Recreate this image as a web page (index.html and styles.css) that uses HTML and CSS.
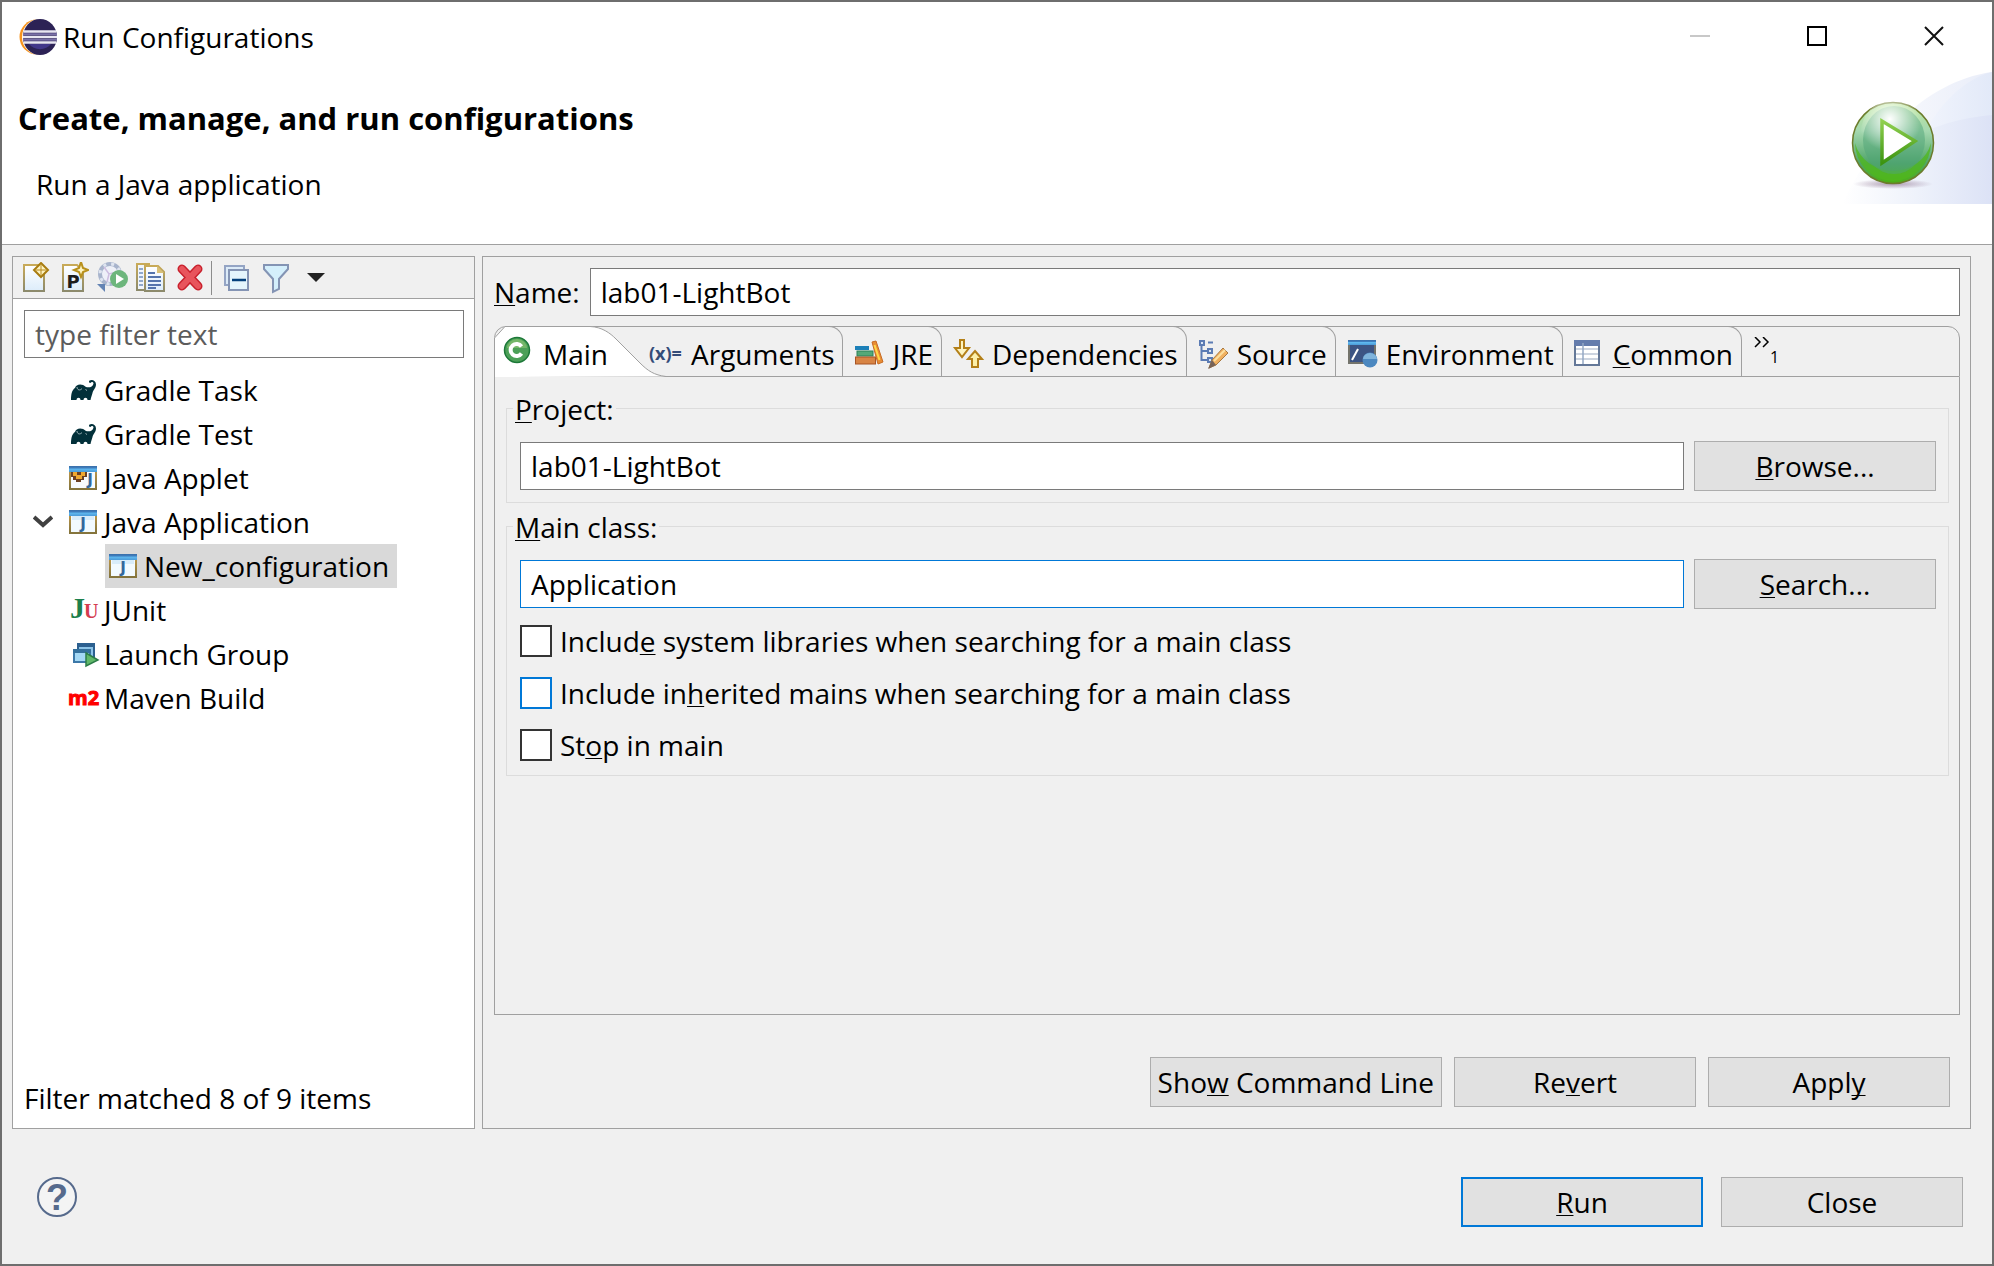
FILE: index.html
```
<!DOCTYPE html>
<html lang="en">

<head>
  <meta charset="UTF-8">
  <meta name="viewport" content="width=device-width, initial-scale=1.0">
  <title>Run Configurations</title>
  <link rel="stylesheet" href="styles.css">
</head>

<body>
  <!-- shared gradients and the gradle icon -->
  <svg class="defs" width="0" height="0" aria-hidden="true">
    <defs>
      <linearGradient id="g-bar" x1="0" y1="0" x2="0" y2="1">
        <stop offset="0" stop-color="#3a6ea8"/>
        <stop offset=".35" stop-color="#3f7fc0"/>
        <stop offset=".5" stop-color="#5fb8ee"/>
        <stop offset="1" stop-color="#4a9ad8"/>
      </linearGradient>
      <linearGradient id="g-frame" x1="0" y1="0" x2="0" y2="1">
        <stop offset="0" stop-color="#c09a4c"/>
        <stop offset="1" stop-color="#84743c"/>
      </linearGradient>
      <linearGradient id="g-page" x1="0" y1="0" x2="0" y2="1">
        <stop offset="0" stop-color="#ffffff"/>
        <stop offset="1" stop-color="#dcecfa"/>
      </linearGradient>
      <linearGradient id="g-edge" x1="0" y1="0" x2="0" y2="1">
        <stop offset="0" stop-color="#c8aa58"/>
        <stop offset="1" stop-color="#8c8a6c"/>
      </linearGradient>
    </defs>
    <symbol id="gradle" viewBox="0 0 28 28">
      <path d="M2 24C2 18 3 14 6 12C7 8 13 7 17 11C20 12 24 11 24.500 7.500C24.500 5.500 22 5.500 21.500 7C20 7 19.500 5.500 20.500 4.500C23 3 27 4.500 27 8.500C27 12 24 14 23.500 17C23 19 22 21 21.500 24H18.500C18.500 21 14.500 21 14.500 24H11.500C11.500 21 7.500 21 7.500 24Z" fill="#02303a"/>
      <path d="M8 11C8 14 11 15 13 12.500M16.500 13.500L18 14.500" fill="none" stroke="#9fb3b8" stroke-width="1"/>
    </symbol>
  </svg>

  <div class="titlebar">
    <svg width="40" height="38" viewBox="0 0 40 38" aria-hidden="true">
      <circle cx="18" cy="19" r="17.500" fill="#f7941e"/>
      <circle cx="21" cy="19" r="18" fill="#fff"/>
      <ellipse cx="21" cy="19" rx="17" ry="18" fill="#2c2255"/>
      <path d="M10 26H32A13 11 0 0 1 10 26Z" fill="#42378a"/>
      <path d="M5 13.500H37M4 19H38M5 24.500H37" stroke="#e8e6f2" stroke-width="2.500"/>
      <path d="M4 16.200H38M4 21.800H38" stroke="#7a70a8" stroke-width="2"/>
    </svg>
    <span class="title">Run Configurations</span>
    <div class="win-controls">
      <button class="minimize" aria-label="Minimize" disabled><svg width="20" height="20"><path d="M0 10H20" stroke="#c8c8c8" stroke-width="2"/></svg></button>
      <button aria-label="Maximize"><svg width="20" height="20"><rect x="1" y="1" width="18" height="18" fill="none" stroke="#000" stroke-width="2"/></svg></button>
      <button aria-label="Close window"><svg width="20" height="20"><path d="M1 1L19 19M19 1L1 19" stroke="#111" stroke-width="2"/></svg></button>
    </div>
  </div>

  <header>
    <div class="headline">
      <h1>Create, manage, and run configurations</h1>
      <p>Run a Java application</p>
    </div>
    <svg width="150" height="132" viewBox="0 0 150 132" aria-hidden="true">
      <defs>
        <linearGradient id="b1" x1="0" x2="1"><stop offset="0" stop-color="#fff"/><stop offset="1" stop-color="#e9edf9"/></linearGradient>
        <linearGradient id="b2" x1="0" x2="1"><stop offset="0" stop-color="#f6f8fe"/><stop offset="1" stop-color="#e2e9f8"/></linearGradient>
        <linearGradient id="b3" x1="0" x2="1"><stop offset="0" stop-color="#fff"/><stop offset=".5" stop-color="#eef2fb"/><stop offset="1" stop-color="#dce2f6"/></linearGradient>
        <linearGradient id="ball" x1="0" y1="0" x2="0" y2="1"><stop offset="0" stop-color="#bfe8a0"/><stop offset=".35" stop-color="#a5d8b0"/><stop offset=".75" stop-color="#4ea468"/><stop offset="1" stop-color="#4cb010"/></linearGradient>
        <radialGradient id="shine" cx=".45" cy=".3" r=".5"><stop offset="0" stop-color="#fff"/><stop offset="1" stop-color="#fff" stop-opacity="0"/></radialGradient>
        <linearGradient id="tri" x1="0" y1="0" x2="0" y2="1"><stop offset="0" stop-color="#90d050"/><stop offset="1" stop-color="#3c9410"/></linearGradient>
        <radialGradient id="shade"><stop offset="0" stop-color="#806080" stop-opacity=".6"/><stop offset="1" stop-color="#806080" stop-opacity="0"/></radialGradient>
      </defs>
      <path d="M0 132C30 70 80 10 150 0V132Z" fill="url(#b1)"/>
      <path d="M60 132C70 60 110 10 150 0V132Z" fill="url(#b2)"/>
      <path d="M0 132C35 75 90 48 150 43V132Z" fill="url(#b3)"/>
      <ellipse cx="51" cy="112" rx="40" ry="5" fill="url(#shade)"/>
      <circle cx="51" cy="71" r="40.500" fill="url(#ball)" stroke="#6c7c2c" stroke-width="1.500"/>
      <path d="M13 71A38 38 0 0 0 89 71A39 36 0 0 1 13 71Z" fill="#50b81c" opacity=".75"/>
      <ellipse cx="52" cy="68" rx="31" ry="34" fill="#50a478" opacity=".5"/>
      <circle cx="51" cy="60" r="32" fill="url(#shine)"/>
      <path d="M40 49V91L73 69Z" fill="#fff" stroke="url(#tri)" stroke-width="3.500"/>
    </svg>
  </header>

  <main>
    <section class="configs">
      <div class="toolbar" role="toolbar" aria-label="Configuration actions">
        <button aria-label="New launch configuration">
          <svg width="28" height="32" viewBox="0 0 28 32">
            <path d="M2 3H16L22 9V29H2Z" fill="url(#g-page)" stroke="url(#g-edge)" stroke-width="2"/>
            <path d="M19 1L26 8L19 15L12 8Z" fill="#fdf3c0" stroke="#a87c10" stroke-width="2"/><path d="M19 3V13M14 8H24" stroke="#b88a20" stroke-width="1"/>
          </svg>
        </button>
        <button aria-label="New launch configuration prototype">
          <svg width="28" height="32" viewBox="0 0 28 32">
            <path d="M2 3H16L22 9V29H2Z" fill="url(#g-page)" stroke="url(#g-edge)" stroke-width="2"/>
            <text x="12" y="26" class="glyph-p">P</text>
            <path d="M20 0L22 6L27 8L22 10L20 15L18 10L13 8L18 6Z" fill="#fdf3c0" stroke="#b8901c" stroke-width="2"/>
          </svg>
        </button>
        <button class="wide" aria-label="Export launch configuration">
          <svg width="32" height="32" viewBox="0 0 32 32">
            <circle cx="13" cy="12" r="10" fill="#eef0f8" stroke="#a8b4cc" stroke-width="4"/>
            <circle cx="13" cy="12" r="10" fill="none" stroke="#dfe5f0" stroke-width="3" stroke-dasharray="3 5"/>
            <path d="M7 5L12 12L20 10M12 12L10 20" fill="none" stroke="#cdbde0" stroke-width="1.500"/>
            <path d="M0 22H8V30Z" fill="#6484b4"/>
            <circle cx="22" cy="17" r="9" fill="#6db67c"/><path d="M19 12L27 17L19 22Z" fill="#fff"/>
          </svg>
        </button>
        <button class="wide" aria-label="Duplicate">
          <svg width="32" height="32" viewBox="0 0 32 32">
            <path d="M2 2H14V28H2Z" fill="#f0f5fc" stroke="url(#g-edge)" stroke-width="2"/>
            <path d="M4 7H8M4 11H8M4 15H8M4 19H8M4 23H8" stroke="#7090bc" stroke-width="1.500"/>
            <path d="M10 4H23L29 10V29H10Z" fill="url(#g-page)" stroke="url(#g-edge)" stroke-width="2"/><path d="M22 4V11H29Z" fill="#d8c078"/>
            <path d="M13 11H20M13 15H26M13 19H26M13 23H26M13 26H21" stroke="#5474ac" stroke-width="1.800"/>
          </svg>
        </button>
        <button aria-label="Delete">
          <svg width="28" height="32" viewBox="0 0 28 32">
            <path d="M6 7L22 24M22 7L6 24" stroke="#c8202c" stroke-width="9" stroke-linecap="round"/>
            <path d="M6 7L22 24M22 7L6 24" stroke="#e8545c" stroke-width="6" stroke-linecap="round"/>
          </svg>
        </button>
        <span class="separator"></span>
        <button aria-label="Collapse all">
          <svg width="28" height="32" viewBox="0 0 28 32">
            <path d="M2 4H21V23H2Z" fill="#dcebf8" stroke="#94a4c4" stroke-width="2"/>
            <path d="M6 8H25V28H6Z" fill="#e4f5fd" stroke="#8494b4" stroke-width="2"/><path d="M9 18H23" stroke="#04407c" stroke-width="2.500"/>
          </svg>
        </button>
        <button aria-label="Filter">
          <svg width="28" height="32" viewBox="0 0 28 32">
            <path d="M2 3H26V7L17 17V27L11 30V17L2 7Z" fill="#d4effc" stroke="#8494b4" stroke-width="2"/>
          </svg>
        </button>
        <button class="drop" aria-label="View menu">
          <svg width="18" height="10"><path d="M0 0H18L9 9Z" fill="#222"/></svg>
        </button>
      </div>
      <input class="filter" type="text" placeholder="type filter text" aria-label="Filter">
      <ul class="tree" role="tree">
        <li role="treeitem"><svg class="icon"><use href="#gradle"/></svg>Gradle Task</li>
        <li role="treeitem"><svg class="icon"><use href="#gradle"/></svg>Gradle Test</li>
        <li role="treeitem">
          <svg class="icon" viewBox="0 0 28 28">
            <rect x="1" y="5" width="26" height="20" fill="#f8fbff" stroke="url(#g-frame)" stroke-width="2"/>
            <path d="M2 8H18V13H15V16H12V18H7V16H4V13H2Z" fill="#6c4024"/><path d="M4 8H16V12H13V15H7V12H4Z" fill="#f0a830"/><path d="M8 8H12V11H8Z" fill="#6c4024"/>
            <rect x="0" y="2" width="28" height="6" fill="url(#g-bar)"/>
            <text x="21" y="21" class="glyph-j">J</text>
          </svg>Java Applet
        </li>
        <li role="treeitem" aria-expanded="true">
          <button class="twisty" aria-label="Collapse Java Application"><svg width="20" height="14"><path d="M1 2L10 10L19 2" fill="none" stroke="#404040" stroke-width="4"/></svg></button>
          <svg class="icon" viewBox="0 0 28 28">
            <rect x="1" y="5" width="26" height="20" fill="#f2faff" stroke="url(#g-frame)" stroke-width="2"/><rect x="3" y="8" width="22" height="4" fill="#d8ecfa"/>
            <rect x="0" y="2" width="28" height="6" fill="url(#g-bar)"/>
            <text x="14" y="21" class="glyph-j">J</text>
          </svg>Java Application
        </li>
        <li class="child" role="treeitem" aria-selected="true">
          <span class="selected"><svg class="icon" viewBox="0 0 28 28">
            <rect x="1" y="5" width="26" height="20" fill="#f2faff" stroke="url(#g-frame)" stroke-width="2"/><rect x="3" y="8" width="22" height="4" fill="#d8ecfa"/>
            <rect x="0" y="2" width="28" height="6" fill="url(#g-bar)"/>
            <text x="14" y="21" class="glyph-j">J</text>
          </svg>New_configuration</span>
        </li>
        <li role="treeitem"><svg class="icon" viewBox="0 0 28 28"><text x="1" y="22" class="glyph-ju">J</text><text x="15" y="22" class="glyph-ju small">U</text></svg>JUnit</li>
        <li role="treeitem">
          <svg class="icon" viewBox="0 0 28 28">
            <rect x="9" y="4" width="16" height="13" fill="#8cc4e8" stroke="#2c6090" stroke-width="2"/><rect x="8" y="3" width="18" height="4" fill="#2c6090"/>
            <rect x="5" y="10" width="16" height="12" fill="#a4d8f4" stroke="#3c78a8" stroke-width="2"/><rect x="4" y="9" width="18" height="4" fill="#34709c"/>
            <path d="M17 13L29 20L17 26Z" fill="#60b868" stroke="#2c7c48" stroke-width="1.500"/>
          </svg>Launch Group
        </li>
        <li role="treeitem"><svg class="icon" viewBox="0 0 28 28"><text x="-1" y="21" class="glyph-m2">m2</text></svg>Maven Build</li>
      </ul>
      <p class="status">Filter matched 8 of 9 items</p>
    </section>

    <section class="editor">
      <div class="name-row">
        <label for="name"><u>N</u>ame:</label>
        <input id="name" type="text" value="lab01-LightBot">
      </div>

      <div class="folder">
        <div class="tabs" role="tablist">
          <button class="tab active" role="tab" aria-selected="true">
            <svg class="tab-shape" width="172" height="51" viewBox="0 0 172 51" aria-hidden="true">
              <path d="M0 51V12L11 0.500H96C108 1 116 7 122 13L146 37C154 45 160 49 172 50.500Z" fill="#fff"/>
              <path d="M0.500 51V12L11 0.500H96C108 1 116 7 122 13L146 37C154 45 160 49 172 50.500" fill="none" stroke="#a0a0a0"/>
            </svg>
            <svg class="icon raised" viewBox="0 0 28 28"><circle cx="14" cy="14" r="12.500" fill="#4ca058" stroke="#1c7838" stroke-width="1.500"/><path d="M4 12A10 9 0 0 1 24 12Z" fill="#88c070" opacity=".7"/><path d="M18.500 10.500A6 6 0 1 0 18.500 17.500" fill="none" stroke="#fff" stroke-width="4"/></svg>
            <span>Main</span>
          </button>
          <button class="tab args" role="tab"><svg class="icon long" viewBox="0 0 32 28"><text x="-1" y="20" class="glyph-x">(x)=</text></svg><span>Arguments</span></button>
          <button class="tab" role="tab">
            <svg class="icon" viewBox="0 0 28 28">
              <rect x="0" y="6" width="14" height="4" fill="#1c80b8"/><rect x="2" y="11" width="16" height="5" fill="#54a878" stroke="#2c8058"/><rect x="0.500" y="17" width="20" height="7" fill="#d88444" stroke="#a85424"/>
              <path d="M17 2L21 1L28 22L23 24Z" fill="#e88c34" stroke="#c86c24"/><path d="M19.500 5L24.500 20" stroke="#ffd848" stroke-width="2"/>
            </svg><span>JRE</span>
          </button>
          <button class="tab" role="tab">
            <svg class="icon" viewBox="0 0 28 28">
              <path d="M6 0H10V8H15L8 17L1 8H6Z" fill="#fdf4c0" stroke="#b48018" stroke-width="2"/>
              <path d="M21 11L28 19H24V27H18V19H14Z" fill="#fdf0a8" stroke="#b48018" stroke-width="2"/>
            </svg><span>Dependencies</span>
          </button>
          <button class="tab" role="tab">
            <svg class="icon" viewBox="0 0 28 28">
              <path d="M2.500 4V20H9M2.500 11H9M9 2.500H14" fill="none" stroke="#5c7cb4" stroke-width="2"/>
              <path d="M1 1H5V5H1ZM9 9H13V13H9ZM9 18H13V22H9Z" fill="#dce6f4" stroke="#5c7cb4" stroke-width="2"/>
              <path d="M24 8L29 13L17 25L10 28L13 20Z" fill="#f0b060" stroke="#a87840"/><path d="M15 21L26 10" stroke="#fce0a0" stroke-width="2"/><path d="M13 20L17 25L9 29Z" fill="#786458"/>
            </svg><span>Source</span>
          </button>
          <button class="tab" role="tab">
            <svg class="icon" viewBox="0 0 28 28">
              <rect x="1" y="3" width="26" height="20" fill="#3c5484" stroke="#74746c" stroke-width="2"/><rect x="0" y="0" width="28" height="5" fill="url(#g-bar)"/>
              <path d="M4 20L10 9" stroke="#fff" stroke-width="2"/><circle cx="22" cy="20" r="7.500" fill="#4c88c0"/><path d="M15 19A7 6 0 0 1 29 19Z" fill="#80b4dc"/>
            </svg><span>Environment</span>
          </button>
          <button class="tab" role="tab">
            <svg class="icon" viewBox="0 0 28 28">
              <rect x="0" y="1" width="24" height="24" fill="#fff" stroke="#647898" stroke-width="2"/><rect x="-1" y="0" width="26" height="6" fill="#647cac"/>
              <path d="M1 9H23M1 14H23M1 19H23" stroke="#ccd4e0" stroke-width="2"/><path d="M8 3V24" stroke="#94a8c4" stroke-width="1.500"/>
            </svg><span><u>C</u>ommon</span>
          </button>
          <button class="more" aria-label="Show 1 more tab">
            <svg width="16" height="11"><path d="M1 0L6 5L1 10M9 0L14 5L9 10" fill="none" stroke="#000" stroke-width="1.500"/></svg><small>1</small>
          </button>
        </div>

        <div class="page" role="tabpanel">
          <fieldset>
            <legend><u>P</u>roject:</legend>
            <div class="pick">
              <input type="text" value="lab01-LightBot" aria-label="Project">
              <button class="btn"><span><u>B</u>rowse...</span></button>
            </div>
          </fieldset>
          <fieldset>
            <legend><u>M</u>ain class:</legend>
            <div class="pick">
              <input class="focused" type="text" value="Application" aria-label="Main class">
              <button class="btn"><span><u>S</u>earch...</span></button>
            </div>
            <div class="checks">
              <label><input type="checkbox"><span>Includ<u>e</u> system libraries when searching for a main class</span></label>
              <label><input class="hot" type="checkbox"><span>Include in<u>h</u>erited mains when searching for a main class</span></label>
              <label><input type="checkbox"><span>St<u>o</u>p in main</span></label>
            </div>
          </fieldset>
        </div>
      </div>

      <div class="actions">
        <button class="btn"><span>Sho<u>w</u> Command Line</span></button>
        <button class="btn"><span>Re<u>v</u>ert</span></button>
        <button class="btn"><span>Appl<u>y</u></span></button>
      </div>
    </section>
  </main>

  <footer>
    <button class="help" aria-label="Help">
      <svg width="40" height="40" viewBox="0 0 40 40"><circle cx="20" cy="20" r="19" fill="#f4f4f4" stroke="#566a8c" stroke-width="2"/><text x="20" y="33" class="glyph-q">?</text></svg>
    </button>
    <div class="dialog-buttons">
      <button class="btn default"><span><u>R</u>un</span></button>
      <button class="btn">Close</button>
    </div>
  </footer>
</body>

</html>
```
FILE: styles.css
```
*,
*::before,
*::after {
  box-sizing: border-box;
}
body {
  display: flex;
  flex-direction: column;
  min-height: 100vh;
  margin: 0;
  border: 2px solid #6e6e6e;
  background: #f0f0f0;
  color: #000;
  font-family: "Open Sans", "Noto Sans", sans-serif;
  font-size: 28px;
  line-height: 38px;
}
button,
input {
  font: inherit;
  color: inherit;
}
button {
  padding: 0;
  border: 0;
  background: none;
}
svg {
  display: block;
  flex: none;
}
u {
  text-decoration-thickness: 1px;
  text-underline-offset: 2px;
  text-decoration-skip-ink: none;
}
.defs {
  position: absolute;
}
.icon {
  width: 28px;
  height: 28px;
  overflow: visible;
}
.icon.long {
  width: 32px;
}

/* text inside icons */
.glyph-j {
  fill: #34689c;
  font: bold 15px "DejaVu Sans", sans-serif;
  text-anchor: middle;
}
.glyph-p {
  fill: #1c1c1c;
  font: bold 18px "DejaVu Sans", sans-serif;
  text-anchor: middle;
}
.glyph-ju {
  fill: #1c804c;
  font: bold 30px "Liberation Serif", serif;
}
.glyph-ju.small {
  fill: #d43c50;
  font-size: 20px;
}
.glyph-m2 {
  fill: #f00;
  stroke: #f00;
  font: bold 20px "Open Sans", sans-serif;
}
.glyph-x {
  fill: #344c78;
  font: bold 18px "Open Sans", sans-serif;
}
.glyph-q {
  fill: #566a8c;
  font: bold 36px "Liberation Sans", sans-serif;
  text-anchor: middle;
}

/* title bar */
.titlebar {
  display: flex;
  align-items: center;
  height: 70px;
  padding-left: 17px;
  background: #fff;
}
.title {
  padding-left: 4px;
}
.win-controls {
  display: flex;
  align-self: flex-start;
  margin-left: auto;
}
.win-controls button {
  display: flex;
  align-items: center;
  justify-content: center;
  width: 117px;
  height: 68px;
}

header {
  display: flex;
  justify-content: space-between;
  height: 173px;
  border-bottom: 1px solid #a0a0a0;
  background: #fff;
}
h1 {
  margin: 25px 0 24px 16px;
  font-size: 31px;
  line-height: 42px;
}
header p {
  margin: 0 0 0 34px;
  line-height: 42px;
}

main {
  display: flex;
  flex: 1;
  gap: 7px;
  padding: 11px 21px 0 10px;
}

/* left side */
.configs {
  display: flex;
  flex: none;
  flex-direction: column;
  width: 463px;
  border: 1px solid #a0a0a0;
  background: #fff;
}
.toolbar {
  display: flex;
  align-items: center;
  gap: 11px;
  height: 42px;
  padding-left: 9px;
  border-bottom: 1px solid #a0a0a0;
  background: #f0f0f0;
}
.toolbar .wide {
  margin: 0 -2px 0 -3px;
}
.separator {
  width: 1px;
  height: 34px;
  margin-left: -4px;
  background: #8c8c8c;
}
.drop {
  margin-left: 6px;
}
input[type="text"] {
  height: 48px;
  min-width: 0;
  padding: 0 10px;
  border: 1px solid #7a7a7a;
  border-radius: 0;
  outline: 0;
  background: #fff;
}
input[type="text"].filter {
  margin: 11px 10px 10px 11px;
}
.filter::placeholder {
  color: #5c5c5c;
  opacity: 1;
}
.tree {
  margin: 0;
  padding: 0;
  list-style: none;
}
.tree li {
  display: flex;
  align-items: center;
  gap: 7px;
  height: 44px;
  padding-left: 56px;
}
.twisty {
  width: 20px;
  margin: 0 9px 0 -36px;
}
.tree .child {
  padding-left: 92px;
}
.selected {
  display: flex;
  align-items: center;
  gap: 7px;
  height: 44px;
  padding: 0 8px 0 4px;
  background: #d9d9d9;
}
.status {
  margin: auto 11px 11px;
}

/* right side */
.editor {
  display: flex;
  flex: 1;
  flex-direction: column;
  min-width: 0;
  padding: 11px 10px 21px 11px;
  border: 1px solid #a0a0a0;
}
.name-row {
  display: flex;
  align-items: center;
  gap: 10px;
}
.name-row input {
  flex: 1;
}
.folder {
  display: flex;
  flex: 1;
  flex-direction: column;
  margin-top: 10px;
}
.tabs {
  display: flex;
  height: 51px;
  border: 1px solid #a0a0a0;
  border-radius: 12px 12px 0 0;
}
.tab {
  display: flex;
  align-items: center;
  gap: 10px;
  height: 50px;
  margin-top: -1px;
  padding: 4px 8px 0 12px;
  border: 1px solid #a0a0a0;
  border-width: 1px 1px 0 0;
  border-top-right-radius: 14px;
}
.tab.active {
  position: relative;
  width: 147px;
  padding-left: 8px;
  gap: 12px;
  border-color: transparent;
}
.tab.active span,
.raised {
  position: relative;
}
.raised {
  margin-bottom: 8px;
}
.tab-shape {
  position: absolute;
  top: -1px;
  left: -1px;
}
.tab.args {
  gap: 9px;
  padding-right: 7px;
  padding-left: 8px;
}
.more {
  display: flex;
  align-items: flex-start;
  padding: 10px 0 0 12px;
}
.more small {
  padding-top: 10px;
  font-size: 16px;
  line-height: 20px;
}
.page {
  flex: 1;
  padding: 13px 10px 0 11px;
  border: 1px solid #a0a0a0;
  border-top: 0;
}
fieldset {
  min-width: 0;
  margin: 0 0 5px;
  padding: 15px 12px 11px 13px;
  border: 1px solid #dcdcdc;
}
legend {
  height: 36px;
  margin-left: -7px;
  padding: 0 2px;
}
.pick {
  display: flex;
  align-items: center;
  gap: 10px;
}
.pick input {
  flex: 1;
}
input[type="text"].focused {
  border-color: #0078d7;
}
.btn {
  min-width: 242px;
  height: 50px;
  padding: 0 7px;
  border: 1px solid #adadad;
  background: #e1e1e1;
  white-space: nowrap;
}
.btn.default {
  border: 2px solid #0078d7;
}
.checks {
  display: flex;
  flex-direction: column;
  align-items: flex-start;
  gap: 14px;
  margin-top: 13px;
}
.checks label {
  display: flex;
  align-items: center;
  gap: 8px;
}
.checks input {
  appearance: none;
  width: 32px;
  height: 32px;
  margin: 0;
  border: 2px solid #333;
  background: #fff;
}
.checks .hot {
  border-color: #0078d7;
}
.actions {
  display: flex;
  justify-content: flex-end;
  gap: 12px;
  margin: 42px 10px 0 0;
}

footer {
  display: flex;
  align-items: flex-start;
  justify-content: space-between;
  padding: 48px 29px 37px 35px;
}
.dialog-buttons {
  display: flex;
  gap: 18px;
}
```
